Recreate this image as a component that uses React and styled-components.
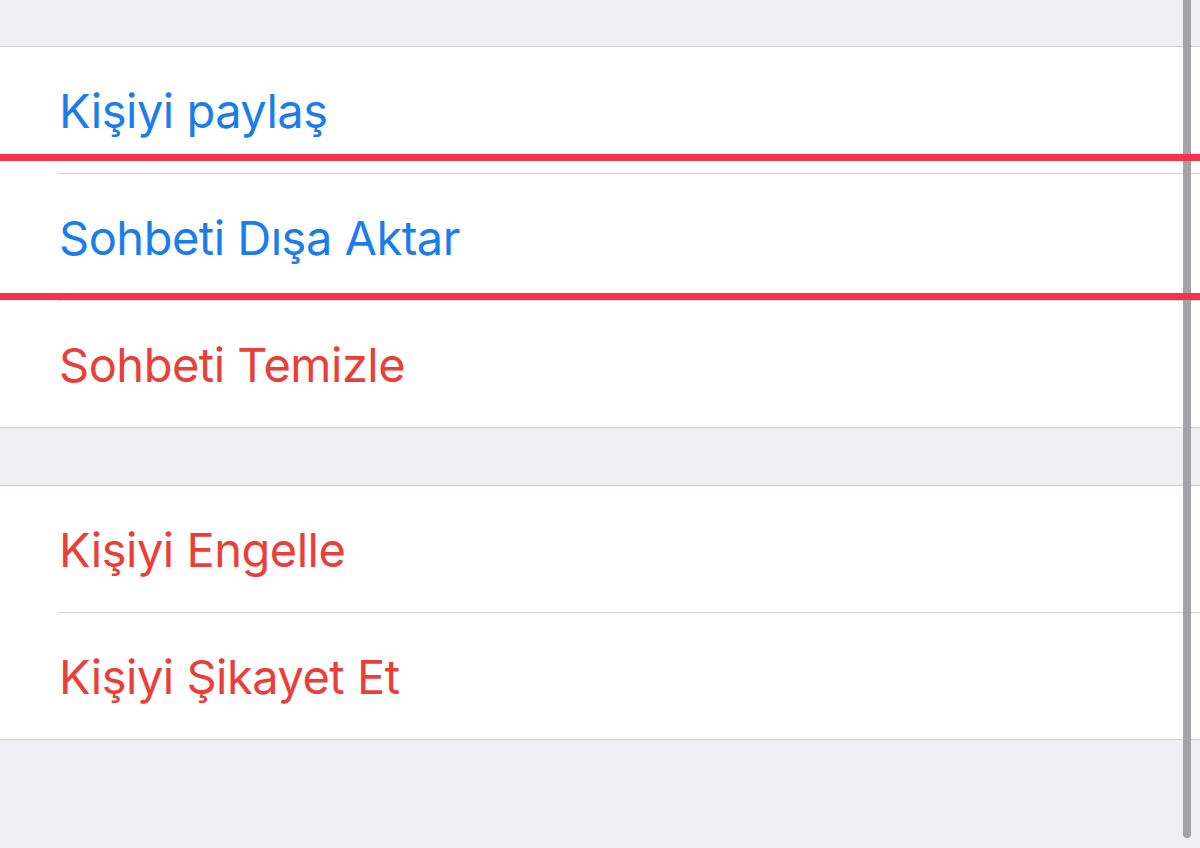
import React from "react";
import styled, { createGlobalStyle } from "styled-components";

const GlobalStyle = createGlobalStyle`
  html, body {
    margin: 0;
    padding: 0;
    background: #efeff4;
  }
  body {
    font-family: "Inter", "Noto Sans", sans-serif;
    -webkit-font-smoothing: antialiased;
  }
`;

const groups = [
  [
    { label: "Kişiyi paylaş", tone: "blue", marked: "top" },
    { label: "Sohbeti Dışa Aktar", tone: "blue", marked: "bottom" },
    { label: "Sohbeti Temizle", tone: "red" },
  ],
  [
    { label: "Kişiyi Engelle", tone: "red" },
    { label: "Kişiyi Şikayet Et", tone: "red" },
  ],
];

export default function App() {
  return (
    <>
      <GlobalStyle />
      <Screen>
        <List>
          {groups.map((items, gi) => (
            <Group key={gi}>
              {items.map((item, i) => (
                <React.Fragment key={item.label}>
                  {i > 0 && <Separator />}
                  <Row>
                    <Label tone={item.tone}>{item.label}</Label>
                    {item.marked && <Mark position={item.marked} />}
                  </Row>
                </React.Fragment>
              ))}
            </Group>
          ))}
        </List>
        <ScrollThumb />
      </Screen>
    </>
  );
}

const Screen = styled.div`
  position: relative;
  width: 1200px;
  height: 848px;
  overflow: hidden;
  background: #efeff4;
`;

const List = styled.div`
  display: flex;
  flex-direction: column;
  gap: 57px;
  padding-top: 46px;
`;

const Group = styled.div`
  background: #ffffff;
  border-top: 1px solid #cdcdd1;
  border-bottom: 1px solid #cdcdd1;
`;

const Row = styled.div`
  position: relative;
  display: flex;
  align-items: center;
  height: 126px;
  padding-left: 59px;
`;

const Separator = styled.div`
  height: 1px;
  margin-left: 58px;
  background: #d3d3d7;
`;

const Label = styled.span`
  font-size: 47px;
  line-height: 1;
  font-weight: 400;
  letter-spacing: -0.5px;
  color: ${({ tone }) => (tone === "red" ? "#ea3f38" : "#1a7deb")};
`;

/* red annotation lines drawn over the screenshot */
const Mark = styled.div`
  position: absolute;
  left: 0;
  right: 0;
  height: 7px;
  background: #f4334b;
  z-index: 4;
  ${({ position }) => (position === "top" ? "top: 107px;" : "top: 119px;")}
`;

const ScrollThumb = styled.div`
  position: absolute;
  top: 0;
  right: 9px;
  width: 8px;
  height: 838px;
  border-radius: 0 0 4px 4px;
  background: #a2a2a7;
  z-index: 3;
`;
